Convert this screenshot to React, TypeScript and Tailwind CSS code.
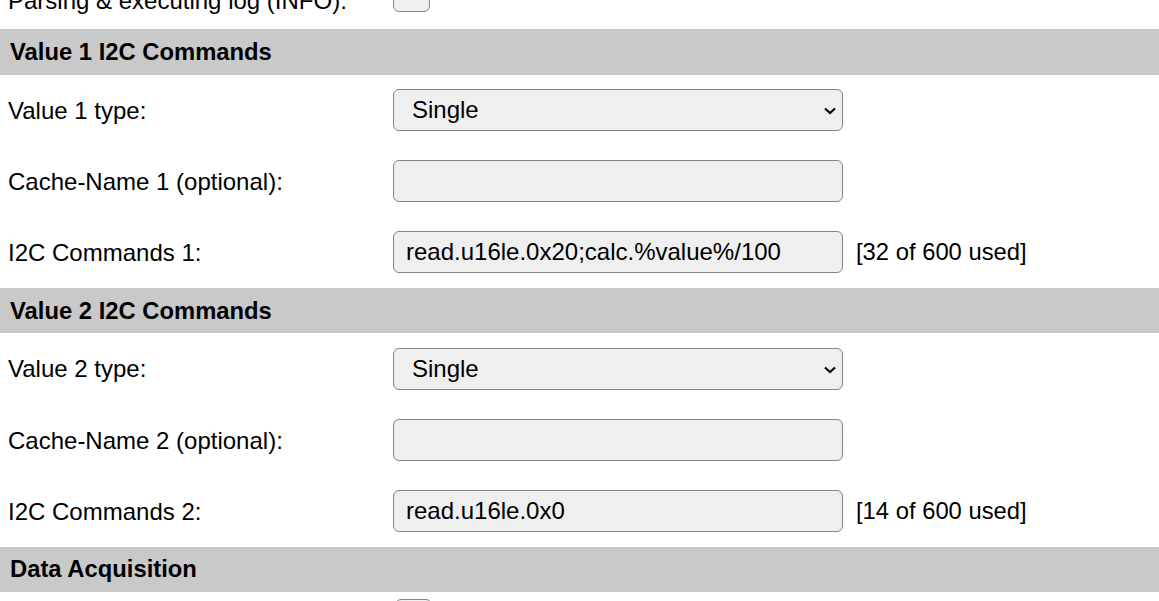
import React from 'react';

const font = { fontFamily: '"Liberation Sans", Arial, sans-serif' };

function SectionHeader({ title }: { title: string }) {
  return (
    <div className="h-[45.5px] bg-[#c9c9c9] flex items-center pl-[10px] text-[23.8px] font-bold text-black">
      {title}
    </div>
  );
}

function Row({ label, children }: { label: string; children: React.ReactNode }) {
  return (
    <div className="h-[71.1px] flex items-center">
      <div className="w-[393px] shrink-0 pl-[8px] pt-[1px] text-[24px] text-black">{label}</div>
      <div className="flex items-center">{children}</div>
    </div>
  );
}

function SelectBox({ value }: { value: string }) {
  return (
    <div className="relative w-[450px] h-[42px]">
      <select
        defaultValue={value}
        className="appearance-none w-full h-full rounded-[6px] border border-[#858585] bg-[#efefef] pl-[18px] text-[24px] text-black outline-none"
        style={font}
      >
        <option>Single</option>
        <option>Multiple</option>
      </select>
      <svg
        className="pointer-events-none absolute right-[7px] top-[18px]"
        width="12"
        height="8"
        viewBox="0 0 12 8"
        fill="none"
      >
        <path d="M1 1.5 L6 6 L11 1.5" stroke="#000" strokeWidth="2.2" />
      </svg>
    </div>
  );
}

function TextBox({ value }: { value?: string }) {
  return (
    <input
      type="text"
      defaultValue={value ?? ''}
      className="w-[450px] h-[42px] rounded-[6px] border border-[#858585] bg-[#efefef] px-[12px] text-[24px] text-black outline-none"
      style={font}
    />
  );
}

function Counter({ text }: { text: string }) {
  return <span className="ml-[13px] text-[23.8px] text-black">{text}</span>;
}

function CheckBox() {
  return <div className="w-[37px] h-[37px] rounded-[6px] border border-[#858585] bg-[#efefef]" />;
}

export default function App() {
  return (
    <div className="w-[1159px] h-[601px] overflow-hidden bg-white leading-[28px]" style={font}>
      <div className="-mt-[42px]">
        {/* row scrolled mostly out of view */}
        <div className="h-[71.1px] flex items-start">
          <div className="w-[393px] shrink-0 pl-[8px] pt-[29px] text-[24px] text-black">
            Parsing &amp; executing log (INFO):
          </div>
          <div className="pt-[17px]">
            <CheckBox />
          </div>
        </div>

        <SectionHeader title="Value 1 I2C Commands" />
        <Row label="Value 1 type:">
          <SelectBox value="Single" />
        </Row>
        <Row label="Cache-Name 1 (optional):">
          <TextBox />
        </Row>
        <Row label="I2C Commands 1:">
          <TextBox value="read.u16le.0x20;calc.%value%/100" />
          <Counter text="[32 of 600 used]" />
        </Row>

        <SectionHeader title="Value 2 I2C Commands" />
        <Row label="Value 2 type:">
          <SelectBox value="Single" />
        </Row>
        <Row label="Cache-Name 2 (optional):">
          <TextBox />
        </Row>
        <Row label="I2C Commands 2:">
          <TextBox value="read.u16le.0x0" />
          <Counter text="[14 of 600 used]" />
        </Row>

        <SectionHeader title="Data Acquisition" />
        <div className="flex items-start h-[71px]">
          <div className="w-[393px] shrink-0" />
          <div className="pt-[7px] pl-[2px]">
            <CheckBox />
          </div>
        </div>
      </div>
    </div>
  );
}
